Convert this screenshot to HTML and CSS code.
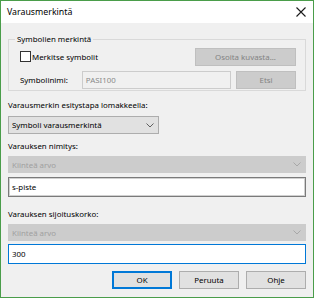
FILE: index.html
```html
<!DOCTYPE html>
<html>
<head>
<meta charset="utf-8">
<link rel="stylesheet" href="styles.css">
</head>
<body>
<div class="window">
  <div class="titlebar">
    <span class="title">Varausmerkintä</span>
    <svg class="close" width="10" height="10" viewBox="0 0 10 10"><path d="M0.5 0.5 L9.5 9.5 M9.5 0.5 L0.5 9.5" stroke="#1a1a1a" stroke-width="1.1" fill="none"/></svg>
  </div>
  <div class="content">
    <fieldset class="group">
      <legend class="legend">Symbolien merkintä</legend>
      <div class="row row-check">
        <label class="check"><span class="box"></span><span>Merkitse symbolit</span></label>
        <span class="btn btn-disabled btn-wide">Osoita kuvasta...</span>
      </div>
      <div class="row row-name">
        <span class="name-label">Symbolinimi:</span>
        <span class="input input-disabled input-name">PASI100</span>
        <span class="btn btn-disabled btn-search">Etsi</span>
      </div>
    </fieldset>

    <div class="label label-first">Varausmerkin esitystapa lomakkeella:</div>
    <div class="select select-short">
      <span>Symboli varausmerkintä</span>
      <svg class="chev" width="8" height="5" viewBox="0 0 8 5"><path d="M0.5 0.5 L4 4 L7.5 0.5" stroke="#606060" stroke-width="1" fill="none"/></svg>
    </div>

    <div class="label">Varauksen nimitys:</div>
    <div class="select select-disabled">
      <span>Kiinteä arvo</span>
      <svg class="chev" width="8" height="5" viewBox="0 0 8 5"><path d="M0.5 0.5 L4 4 L7.5 0.5" stroke="#a8a8a8" stroke-width="1" fill="none"/></svg>
    </div>
    <div class="input input-text">s-piste</div>

    <div class="label label-third">Varauksen sijoituskorko:</div>
    <div class="select select-disabled">
      <span>Kiinteä arvo</span>
      <svg class="chev" width="8" height="5" viewBox="0 0 8 5"><path d="M0.5 0.5 L4 4 L7.5 0.5" stroke="#a8a8a8" stroke-width="1" fill="none"/></svg>
    </div>
    <div class="input input-text input-focus">300</div>

    <div class="buttons">
      <span class="btn btn-default">OK</span>
      <span class="btn">Peruuta</span>
      <span class="btn">Ohje</span>
    </div>
  </div>
</div>
</body>
</html>
```

FILE: styles.css
```css
* { box-sizing: border-box; }
html, body { margin: 0; padding: 0; }
body {
  font-family: "Noto Sans", "DejaVu Sans", sans-serif;
  font-size: 7.9px;
  color: #000;
  background: #fff;
}
.window {
  width: 314px;
  height: 298px;
  border: 1px solid #4a9d4a;
  background: #f0f0f0;
  display: flex;
  flex-direction: column;
}
.titlebar {
  height: 22px;
  background: #fff;
  display: flex;
  align-items: center;
  justify-content: space-between;
  padding: 0 7px 0 6px;
}
.title { font-size: 8.8px; color: #000; }
.close { display: block; }
.content {
  padding: 0 7px;
  display: flex;
  flex-direction: column;
}
.group {
  margin: 8px 0 0 0;
  padding: 0 9px 1px 11px;
  border: 1px solid #d9d9d9;
  min-width: 0;
}
.legend {
  margin-left: -5px;
  padding: 0 2px;
  line-height: 16px;
  height: 16px;
}
.row { display: flex; align-items: center; }
.row-check { margin-top: 1px; height: 18px; justify-content: space-between; }
.row-name { margin-top: 5px; height: 18px; }
.check { display: flex; align-items: center; gap: 1px; }
.box {
  width: 11px;
  height: 11px;
  border: 1px solid #333;
  background: #fff;
  margin-top: -2px;
}
.btn {
  display: flex;
  align-items: center;
  justify-content: center;
  height: 18px;
  width: 60px;
  background: #e1e1e1;
  border: 1px solid #adadad;
  color: #000;
}
.btn-disabled {
  background: #cccccc;
  border-color: #bfbfbf;
  color: #838383;
}
.btn-wide { width: 101px; }
.btn-search { width: 60px; margin-left: 5px; }
.name-label { width: 62px; }
.input {
  display: flex;
  align-items: center;
  background: #fff;
  border: 1px solid #7a7a7a;
  padding-left: 3px;
}
.input-disabled {
  background: #f0f0f0;
  border-color: #cccccc;
  color: #8a8a8a;
}
.input-name { width: 150px; height: 18px; }
.label { line-height: 15px; height: 15px; margin-top: 5px; }
.label-first { margin-top: 7px; }
.label-third { margin-top: 10px; }
.select {
  display: flex;
  align-items: center;
  justify-content: space-between;
  height: 18px;
  margin-top: 3px;
  padding: 0 4px 0 3px;
  background: #e1e1e1;
  border: 1px solid #adadad;
}
.select-short { width: 151px; }
.select-disabled {
  height: 17px;
  margin-top: 2px;
  background: #cccccc;
  border-color: #cccccc;
  color: #a0a0a0;
}
.chev { display: block; }
.input-text {
  height: 20px;
  margin-top: 4px;
  border-color: #7a7a7a;
  box-shadow: inset 0 0 0 1px #d0d0d0;
}
.input-focus {
  margin-top: 3px;
  border-color: #0078d7;
  box-shadow: none;
}
.buttons {
  display: flex;
  justify-content: flex-end;
  gap: 7px;
  margin-top: 7px;
}
.btn-default {
  border-color: #0078d7;
  box-shadow: inset 0 0 0 1px #0078d7;
}
```
